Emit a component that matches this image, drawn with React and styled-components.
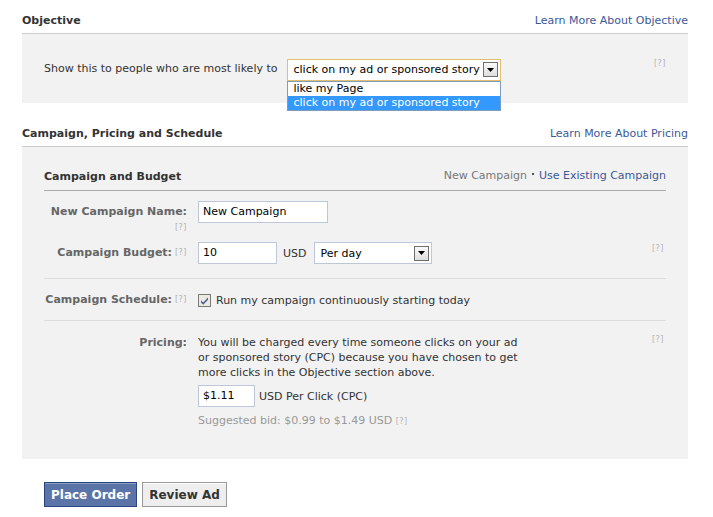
import React from "react";
import styled, { createGlobalStyle } from "styled-components";

const GlobalStyle = createGlobalStyle`
    body{
        margin:0;
        background:#fff;
        font-family:"DejaVu Sans",sans-serif;
        font-size:11px;
        color:#333;
    }
`;

const Help = () => <HelpMark>[?]</HelpMark>;

const Arrow = () => (
    <ArrowBox>
        <svg width="7" height="4" viewBox="0 0 7 4"><path d="M0 0h7L3.5 4z" fill="#000"/></svg>
    </ArrowBox>
);

const CheckIcon = () => (
    <svg width="13" height="13" viewBox="0 0 13 13">
        <rect x="0.5" y="0.5" width="12" height="12" fill="#eceae0" stroke="#7a7a7a"/>
        <path d="M3 6.2l2.2 2.3L10 3.6v2.2L5.2 10.7 3 8.4z" fill="#4a5fa0"/>
    </svg>
);

const App = () => {
    return (
        <Page>
            <GlobalStyle/>
            <SectionHead>
                <h2>Objective</h2>
                <Link>Learn More About Objective</Link>
            </SectionHead>
            <ObjectivePanel>
                <span>Show this to people who are most likely to</span>
                <SelectWrap>
                    <FakeSelect $w={214} $focus>
                        <span>click on my ad or sponsored story</span>
                        <Arrow/>
                    </FakeSelect>
                    <Options>
                        <Option>like my Page</Option>
                        <Option $active>click on my ad or sponsored story</Option>
                    </Options>
                </SelectWrap>
                <RightHelp><Help/></RightHelp>
            </ObjectivePanel>

            <SectionHead $gap>
                <h2>Campaign, Pricing and Schedule</h2>
                <Link>Learn More About Pricing</Link>
            </SectionHead>
            <CampaignPanel>
                <SubHead>
                    <h3>Campaign and Budget</h3>
                    <span>
                        <Muted>New Campaign</Muted>
                        <Dot />
                        <Link>Use Existing Campaign</Link>
                    </span>
                </SubHead>

                <Group>
                    <Row>
                        <Label $stack>
                            New Campaign Name:
                            <Help/>
                        </Label>
                        <Field>
                            <Input $w={130}>New Campaign</Input>
                        </Field>
                        <span/>
                    </Row>
                    <Row>
                        <Label>
                            Campaign Budget: <Help/>
                        </Label>
                        <Field>
                            <Input $w={79}>10</Input>
                            <Unit>USD</Unit>
                            <FakeSelect $w={118}>
                                <span>Per day</span>
                                <Arrow/>
                            </FakeSelect>
                        </Field>
                        <Help/>
                    </Row>
                </Group>

                <Group $check>
                    <Row $center>
                        <Label>
                            Campaign Schedule: <Help/>
                        </Label>
                        <Field>
                            <CheckIcon/>
                            <CheckText>Run my campaign continuously starting today</CheckText>
                        </Field>
                        <span/>
                    </Row>
                </Group>

                <Pricing>
                    <Label $top>Pricing:</Label>
                    <div>
                        <Para>
                            You will be charged every time someone clicks on your ad
                            or sponsored story (CPC) because you have chosen to get
                            more clicks in the Objective section above.
                        </Para>
                        <BidRow>
                            <Input $w={57}>$1.11</Input>
                            <span>USD Per Click (CPC)</span>
                        </BidRow>
                        <Suggest>
                            Suggested bid: $0.99 to $1.49 USD <Help/>
                        </Suggest>
                    </div>
                    <Help/>
                </Pricing>
            </CampaignPanel>

            <Actions>
                <Button $primary>Place Order</Button>
                <Button>Review Ad</Button>
            </Actions>
        </Page>
    );
}

const Page = styled.div`
    width:666px;
    padding-left:22px;
    padding-bottom:20px;
`;

const SectionHead = styled.div`
    display:flex;
    justify-content:space-between;
    align-items:flex-end;
    box-sizing:border-box;
    height:34px;
    margin-top:${p => p.$gap ? "10px" : "0"};
    padding-bottom:5px;
    border-bottom:1px solid #ccc;
    >h2{
        margin:0;
        font-size:11px;
        font-weight:bold;
        color:#333;
        line-height:14px;
    }
`;

const Link = styled.a`
    color:#3b5998;
    font-size:11px;
    line-height:14px;
    cursor:pointer;
`;

const Muted = styled.span`
    color:#777;
    font-size:11px;
`;

const Dot = styled.span`
    display:inline-block;
    width:2px;
    height:2px;
    margin:0 5px 4px;
    background:#555;
`;

const ObjectivePanel = styled.div`
    position:relative;
    display:flex;
    align-items:center;
    gap:9px;
    height:69px;
    padding:0 22px;
    background:#f2f2f2;
    >span{
        margin-top:-1px;
    }
`;

const RightHelp = styled.div`
    margin-left:auto;
    align-self:flex-start;
    margin-top:22px;
`;

const SelectWrap = styled.div`
    position:relative;
    margin-top:2px;
`;

const FakeSelect = styled.div`
    display:flex;
    align-items:center;
    justify-content:space-between;
    box-sizing:border-box;
    width:${p => p.$w}px;
    height:22px;
    padding:0 2px 0 6px;
    background:#fff;
    border:1px solid ${p => p.$focus ? "#e3c06f" : "#bdc7d8"};
    color:#000;
    white-space:nowrap;
`;

const ArrowBox = styled.span`
    display:flex;
    align-items:center;
    justify-content:center;
    box-sizing:border-box;
    width:15px;
    height:15px;
    border:1px solid #6f6f6f;
    background:linear-gradient(#fafafa,#dedede);
`;

const Options = styled.div`
    position:absolute;
    top:22px;
    left:0;
    box-sizing:border-box;
    width:214px;
    border:1px solid #7f9db9;
    background:#fff;
    z-index:2;
`;

const Option = styled.div`
    height:14px;
    line-height:14px;
    padding-left:6px;
    white-space:nowrap;
    color:${p => p.$active ? "#fff" : "#000"};
    background:${p => p.$active ? "#3399ff" : "#fff"};
`;

const HelpMark = styled.span`
    font-size:8px;
    color:#b3b3b3;
    letter-spacing:0.5px;
    white-space:nowrap;
`;

const CampaignPanel = styled.div`
    background:#f2f2f2;
    padding:0 22px 30px;
`;

const SubHead = styled.div`
    display:flex;
    justify-content:space-between;
    align-items:flex-end;
    box-sizing:border-box;
    height:44px;
    padding-bottom:7px;
    border-bottom:1px solid #aaa;
    >h3{
        margin:0;
        font-size:11px;
        font-weight:bold;
        color:#333;
    }
`;

const Group = styled.div`
    display:flex;
    flex-direction:column;
    gap:10px;
    padding:${p => p.$check ? "10px 0 9px" : "10px 0 14px"};
    border-bottom:1px solid #ddd;
`;

const Row = styled.div`
    display:grid;
    grid-template-columns:143px 1fr 14px;
    column-gap:11px;
    align-items:${p => p.$center ? "center" : "start"};
    >span:last-child, >${HelpMark}{
        padding-top:2px;
    }
`;

const Label = styled.div`
    display:flex;
    flex-direction:${p => p.$stack ? "column" : "row"};
    align-items:${p => p.$stack ? "flex-end" : "center"};
    justify-content:flex-end;
    gap:${p => p.$stack ? "0" : "3px"};
    min-height:${p => p.$top ? "15px" : "22px"};
    line-height:${p => p.$top ? "15px" : "22px"};
    font-weight:bold;
    color:#666;
    text-align:right;
    white-space:nowrap;
    >${HelpMark}{
        line-height:${p => p.$stack ? "9px" : "22px"};
        font-weight:normal;
    }
`;

const Field = styled.div`
    display:flex;
    align-items:center;
    gap:6px;
    min-height:22px;
`;

const Input = styled.div`
    box-sizing:border-box;
    width:${p => p.$w}px;
    height:22px;
    line-height:20px;
    padding:0 4px;
    background:#fff;
    border:1px solid #bdc7d8;
    color:#000;
`;

const Unit = styled.span`
    margin-right:1px;
`;

const CheckText = styled.span`
    margin-left:-1px;
`;

const Pricing = styled.div`
    display:grid;
    grid-template-columns:143px 1fr 14px;
    column-gap:11px;
    align-items:start;
    padding-top:14px;
`;

const Para = styled.p`
    margin:0;
    width:330px;
    line-height:15px;
`;

const BidRow = styled.div`
    display:flex;
    align-items:center;
    gap:4px;
    margin-top:5px;
`;

const Suggest = styled.div`
    margin-top:6px;
    line-height:15px;
    color:#999;
`;

const Actions = styled.div`
    display:flex;
    gap:5px;
    padding:23px 0 0 22px;
`;

const Button = styled.button`
    box-sizing:border-box;
    height:25px;
    padding:0 6px;
    font-family:"DejaVu Sans",sans-serif;
    font-size:12px;
    font-weight:bold;
    color:${p => p.$primary ? "#fff" : "#333"};
    background:${p => p.$primary ? "#5b74a8" : "#eee"};
    border:1px solid ${p => p.$primary ? "#29447e" : "#999"};
    box-shadow:${p => p.$primary ? "inset 0 1px 0 #8a9cc2" : "inset 0 1px 0 #fff"};
`;

export default App;
